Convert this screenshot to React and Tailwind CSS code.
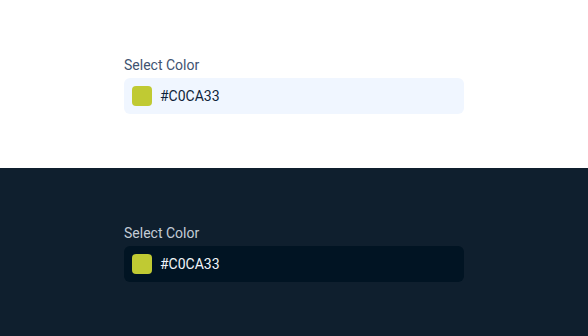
import React from "react";

const ColorField = ({ dark }) => (
  <div className="w-[340px]">
    <label
      className={`block text-sm leading-5 mb-[3px] ${
        dark ? "text-[#c3ccd6]" : "text-[#3f5371]"
      }`}
    >
      Select Color
    </label>
    <div
      className={`flex items-center h-9 px-2 gap-2 rounded-md ${
        dark ? "bg-[#011423]" : "bg-[#f0f6ff]"
      }`}
    >
      <span className="w-5 h-5 rounded bg-[#c0ca33]" />
      <span className={`text-sm ${dark ? "text-[#f1f5f9]" : "text-[#0f1f3a]"}`}>
        #C0CA33
      </span>
    </div>
  </div>
);

export default function App() {
  return (
    <div className="font-['Roboto',sans-serif]">
      <div className="h-[168px] bg-white flex items-center justify-center">
        <ColorField />
      </div>
      <div className="h-[168px] bg-[#0f1f2e] flex items-center justify-center">
        <ColorField dark />
      </div>
    </div>
  );
}
